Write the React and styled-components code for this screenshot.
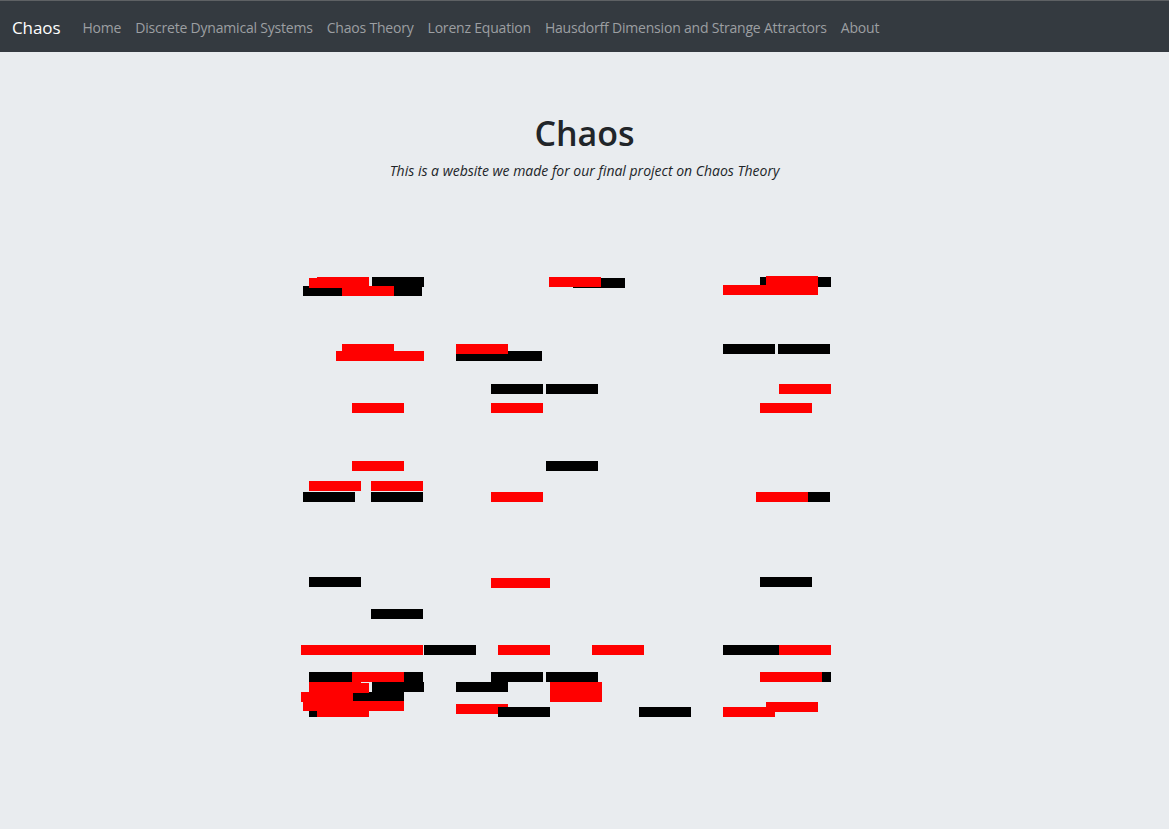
import styled, { createGlobalStyle } from "styled-components";

const GlobalStyle = createGlobalStyle`
  html, body {
    margin: 0;
    padding: 0;
    background: #e9ecef;
    font-family: "Open Sans", "Noto Sans", sans-serif;
  }
`;

const Navbar = styled.nav`
  display: flex;
  align-items: center;
  height: 52px;
  padding: 2px 12px 0;
  box-sizing: border-box;
  background: #343a40;
  border-top: 1px solid #5e6164;
`;

const Brand = styled.a`
  color: #fff;
  font-size: 17px;
  letter-spacing: -0.1px;
  margin-right: 15px;
  text-decoration: none;
`;

const NavLinks = styled.div`
  display: flex;
`;

const NavLink = styled.a`
  color: #9c9fa2;
  font-size: 14px;
  letter-spacing: -0.2px;
  padding: 0 7px;
  text-decoration: none;
`;

const Hero = styled.header`
  display: flex;
  flex-direction: column;
  align-items: center;
  padding-top: 61px;
`;

const Title = styled.h1`
  margin: 0;
  font-size: 34px;
  font-weight: 600;
  color: #212529;
  line-height: 1.2;
`;

const Subtitle = styled.p`
  margin: 7px 0 0;
  font-size: 14px;
  font-style: italic;
  color: #212529;
`;

const Canvas = styled.svg`
  display: block;
  margin: 70px auto 0;
`;

const links = [
  "Home",
  "Discrete Dynamical Systems",
  "Chaos Theory",
  "Lorenz Equation",
  "Hausdorff Dimension and Strange Attractors",
  "About",
];

// bars: [x, y, color] in page coords; each 52x10
const bars = [
  [303, 286, "k"], [370, 286, "k"], [372, 277, "k"],
  [309, 278, "r"], [317, 277, "r"], [342, 286, "r"],
  [573, 278, "k"], [549, 277, "r"],
  [760, 277, "k"], [779, 277, "k"], [766, 276, "r"], [723, 285, "r"], [766, 285, "r"],
  [342, 344, "r"], [336, 351, "r"], [372, 351, "r"],
  [456, 351, "k"], [490, 351, "k"], [456, 344, "r"],
  [723, 344, "k"], [778, 344, "k"],
  [491, 384, "k"], [546, 384, "k"], [779, 384, "r"],
  [352, 403, "r"], [491, 403, "r"], [760, 403, "r"],
  [352, 461, "r"], [546, 461, "k"],
  [309, 481, "r"], [371, 481, "r"],
  [303, 492, "k"], [371, 492, "k"],
  [491, 492, "r"], [778, 492, "k"], [756, 492, "r"],
  [309, 577, "k"], [491, 578, "r"], [498, 578, "r"], [760, 577, "k"],
  [371, 609, "k"],
  [424, 645, "k"], [301, 645, "r"], [317, 645, "r"], [342, 645, "r"], [371, 645, "r"],
  [498, 645, "r"], [592, 645, "r"],
  [723, 645, "k"], [766, 645, "k"], [779, 645, "r"],
  [309, 672, "k"], [371, 672, "k"], [352, 672, "r"],
  [372, 682, "k"], [352, 692, "k"], [309, 707, "k"],
  [309, 682, "r"], [317, 683, "r"], [301, 692, "r"],
  [303, 701, "r"], [352, 701, "r"], [317, 707, "r"],
  [456, 682, "k"], [491, 672, "k"], [546, 672, "k"],
  [456, 704, "r"], [498, 707, "k"],
  [550, 682, "r"], [550, 692, "r"], [639, 707, "k"],
  [779, 672, "k"], [760, 672, "r"], [770, 672, "r"],
  [766, 702, "r"], [723, 707, "r"],
];

const OX = 285;
const OY = 250;

export default function App() {
  return (
    <>
      <GlobalStyle />
      <Navbar>
        <Brand>Chaos</Brand>
        <NavLinks>
          {links.map((l) => (
            <NavLink key={l}>{l}</NavLink>
          ))}
        </NavLinks>
      </Navbar>
      <Hero>
        <Title>Chaos</Title>
        <Subtitle>This is a website we made for our final project on Chaos Theory</Subtitle>
      </Hero>
      <Canvas width="600" height="480" viewBox="0 0 600 480">
        {bars.map(([x, y, c], i) => (
          <rect
            key={i}
            x={x - OX}
            y={y - OY}
            width="52"
            height="10"
            fill={c === "r" ? "#ff0000" : "#000000"}
          />
        ))}
      </Canvas>
    </>
  );
}
